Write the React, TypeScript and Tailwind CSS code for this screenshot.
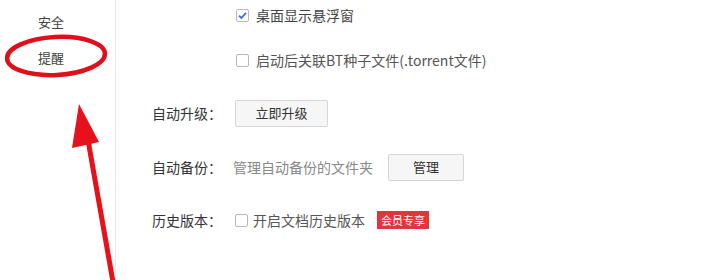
import React from 'react';

const Box = ({ checked }: { checked?: boolean }) => (
  <span className="w-[13px] h-[13px] border border-[#b8b8b8] bg-white rounded-[2px] flex items-center justify-center shrink-0">
    {checked && (
      <svg width="11" height="11" viewBox="0 0 11 11">
        <path d="M2 5.6 L4.4 8 L9 2.8" fill="none" stroke="#3a6fc4" strokeWidth="1.8" />
      </svg>
    )}
  </span>
);

const Btn = ({ children, w }: { children: React.ReactNode; w: string }) => (
  <button className={`${w} h-[27px] border border-[#d6d6d6] bg-[#f6f6f6] rounded-[2px] text-[13px] text-[#333]`}>
    {children}
  </button>
);

export default function App() {
  return (
    <div
      className="relative w-[703px] h-[280px] bg-white overflow-hidden flex text-[14px]"
      style={{ fontFamily: '"Noto Sans CJK SC", "Noto Sans", sans-serif' }}
    >
      <div className="w-[116px] h-full border-r border-[#e8e8e8] pt-[12px] pl-[38px] text-[#444] text-[13px]">
        <div className="h-[20px] leading-[20px]">安全</div>
        <div className="h-[20px] leading-[20px] mt-[16px]">提醒</div>
      </div>

      <div className="flex-1 pl-[36px] text-[#333]">
        <div className="flex items-center gap-[7px] h-[20px] mt-[5px] ml-[84px] text-[#444]">
          <Box checked />
          <span>桌面显示悬浮窗</span>
        </div>
        <div className="flex items-center gap-[7px] h-[20px] mt-[25px] ml-[84px] text-[#555]">
          <Box />
          <span>启动后关联BT种子文件(.torrent文件)</span>
        </div>

        <div className="flex items-center h-[28px] mt-[29px]">
          <span className="w-[83px]">自动升级：</span>
          <Btn w="w-[93px]">立即升级</Btn>
        </div>

        <div className="flex items-center h-[28px] mt-[26px]">
          <span className="w-[81px]">自动备份：</span>
          <span className="text-[#888]">管理自动备份的文件夹</span>
          <span className="ml-[15px]">
            <Btn w="w-[76px]">管理</Btn>
          </span>
        </div>

        <div className="flex items-center h-[24px] mt-[27px]">
          <span className="w-[83px]">历史版本：</span>
          <Box />
          <span className="ml-[5px] text-[#555]">开启文档历史版本</span>
          <span className="ml-[12px] bg-[#e0353b] text-white text-[11px] h-[18px] px-[4px] leading-[18px]">会员专享</span>
        </div>
      </div>

      <svg className="absolute inset-0 pointer-events-none" width="703" height="280" viewBox="0 0 703 280">
        <ellipse cx="56" cy="56" rx="49" ry="19" fill="none" stroke="#e0101a" strokeWidth="4.5" transform="rotate(-3 56 56)" />
        <line x1="88" y1="140" x2="113" y2="282" stroke="#e8101a" strokeWidth="5" />
        <polygon points="79,104 72,148 99,142" fill="#e8101a" />
      </svg>
    </div>
  );
}
